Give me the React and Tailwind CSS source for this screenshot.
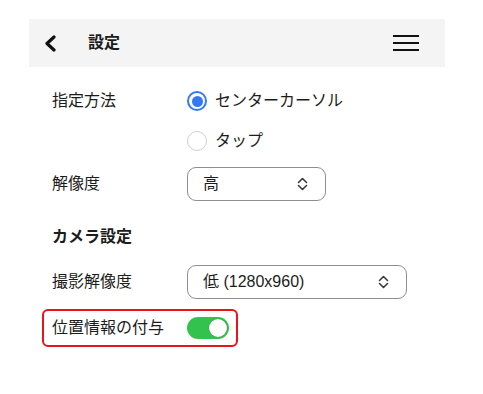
import React, { useState } from 'react';

const font = { fontFamily: '"Liberation Sans", "Noto Sans CJK JP", sans-serif' };

// Up/down chevron used inside the select boxes
const UpDown = () => (
  <svg width="11" height="14" viewBox="0 0 11 14" fill="none" stroke="#3a3a3a" strokeWidth="1.6" strokeLinecap="round" strokeLinejoin="round">
    <polyline points="1.5,5.5 5.5,1.5 9.5,5.5" />
    <polyline points="1.5,8.5 5.5,12.5 9.5,8.5" />
  </svg>
);

const Radio = ({ checked, label, onClick }) => (
  <button onClick={onClick} className="flex items-center gap-2 h-7">
    {checked ? (
      <span className="w-5 h-5 rounded-full border-2 border-[#3478f6] flex items-center justify-center">
        <span className="w-[11px] h-[11px] rounded-full bg-[#3478f6]" />
      </span>
    ) : (
      <span className="w-5 h-5 rounded-full border border-[#cfcfcf] bg-white" />
    )}
    <span className="text-[16px] text-[#1c1c1c]">{label}</span>
  </button>
);

const Select = ({ value, width }) => (
  <div className={`${width} h-[34px] border border-[#8e8e8e] rounded-[9px] flex items-center justify-between pl-[15px] pr-[17px] bg-white`}>
    <span className="text-[16px] text-[#1c1c1c]">{value}</span>
    <UpDown />
  </div>
);

const App = () => {
  // which method is chosen
  const [method, setMethod] = useState('center');
  const [geo, setGeo] = useState(true);

  return (
    <div className="w-[483px] h-[394px] bg-white pl-[29px] pt-[19px]" style={font}>
      <div className="w-[416px]">
        {/* Header bar */}
        <div className="h-12 bg-[#f4f4f4] flex items-center pl-[15px] pr-[26px]">
          <svg width="13" height="17" viewBox="0 0 13 17" fill="none" stroke="#111" strokeWidth="3.2" strokeLinecap="round" strokeLinejoin="round">
            <polyline points="10,2 3,8.5 10,15" />
          </svg>
          <span className="ml-[31px] text-[16px] font-bold text-[#1c1c1c]">設定</span>
          <div className="ml-auto flex flex-col gap-[5px]">
            <span className="block w-[26px] h-[2px] bg-[#111]" />
            <span className="block w-[26px] h-[2px] bg-[#111]" />
            <span className="block w-[26px] h-[2px] bg-[#111]" />
          </div>
        </div>

        <div className="pl-[23px] pt-5 text-[#1c1c1c]">
          <div className="flex items-center h-7">
            <span className="w-[135px] text-[16px]">指定方法</span>
            <Radio checked={method === 'center'} label="センターカーソル" onClick={() => setMethod('center')} />
          </div>
          <div className="flex items-center h-7 mt-3">
            <span className="w-[135px]" />
            <Radio checked={method === 'tap'} label="タップ" onClick={() => setMethod('tap')} />
          </div>
          <div className="flex items-center mt-3">
            <span className="w-[135px] text-[16px]">解像度</span>
            <Select value="高" width="w-[139px]" />
          </div>

          <div className="mt-6 h-6 flex items-center text-[16px] font-bold">カメラ設定</div>

          <div className="flex items-center mt-4">
            <span className="w-[135px] text-[16px]">撮影解像度</span>
            <Select value="低 (1280x960)" width="w-[220px]" />
          </div>

          {/* highlighted row */}
          <div className="-ml-[10px] mt-[10px] w-[196px] h-[38px] border-2 border-[#e8141b] rounded-[6px] flex items-center pl-2">
            <span className="w-[135px] text-[16px]">位置情報の付与</span>
            <button
              onClick={() => setGeo(!geo)}
              className={`w-[42px] h-[22px] rounded-full flex items-center px-[2px] ${geo ? 'bg-[#34c24f] justify-end' : 'bg-[#e5e5e5] justify-start'}`}
            >
              <span className="w-[18px] h-[18px] rounded-full bg-white shadow-[0_0_1px_rgba(0,0,0,0.4)]" />
            </button>
          </div>
        </div>
      </div>
    </div>
  );
};

export default App;
